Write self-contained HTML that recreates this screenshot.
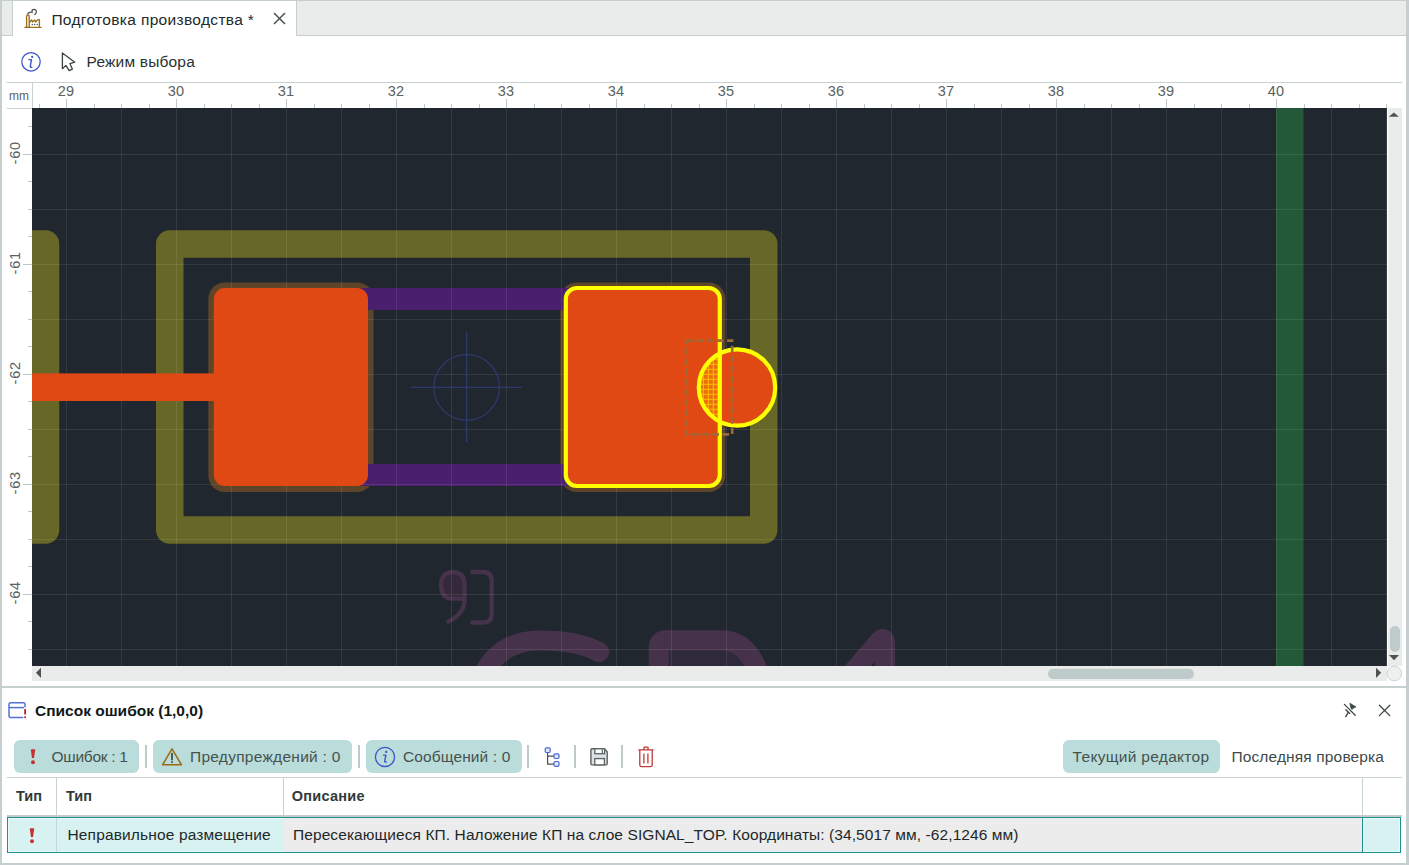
<!DOCTYPE html><html><head><meta charset="utf-8"><style>
*{margin:0;padding:0;box-sizing:border-box}
html,body{width:1409px;height:865px;overflow:hidden;background:#fff;font-family:"Liberation Sans",sans-serif;position:relative}
.a{position:absolute}
.t{position:absolute;white-space:pre;line-height:1}
</style></head><body><div class="a" style="left:0px;top:0px;width:1409px;height:1px;background:#c5cfcf"></div>
<div class="a" style="left:0px;top:0px;width:2px;height:865px;background:#c5cfcf"></div>
<div class="a" style="left:1406px;top:0px;width:3px;height:865px;background:#c5cfcf"></div>
<div class="a" style="left:2px;top:1px;width:1404px;height:34px;background:#eaeceb"></div>
<div class="a" style="left:2px;top:35px;width:1404px;height:1px;background:#c5cfcf"></div>
<div class="a" style="left:12px;top:1px;width:285px;height:35px;background:#fff;border-left:1px solid #c5cfcf;border-right:1px solid #c5cfcf"></div>
<svg class="a" style="left:22px;top:7px" width="22" height="22" viewBox="0 0 22 22">
<path d="M5.6 6.8 Q7.2 4.6 10 5.1 M10.3 5.3 Q9.2 2.5 12 2.4 Q14.6 2.4 14.3 5.1 Q14 6.8 12.8 7.4" fill="none" stroke="#4d5555" stroke-width="1.25" stroke-linecap="round"/>
<path d="M4.6 19.8 L4.6 9.3 Q4.6 8 5.9 8 Q7.2 8 7.2 9.3 L7.2 19.8 M7.6 15.2 L9.6 12.9 L10.6 15 L12.6 12.9 L13.6 15 L15.6 12.9 L17.4 12.7 L17.4 20.2 M2.4 20.4 L19.5 20.4" fill="none" stroke="#9b6e1e" stroke-width="1.35" stroke-linejoin="round"/>
<circle cx="10.3" cy="17.5" r="0.75" fill="#4d5555"/><circle cx="12.6" cy="17.5" r="0.75" fill="#4d5555"/><circle cx="15.2" cy="17.5" r="0.75" fill="#4d5555"/>
</svg>
<div class="t" style="left:51.4px;top:11.68px;font-size:15.5px;color:#222a2a;font-weight:400;letter-spacing:0.33px;">Подготовка производства *</div>
<svg class="a" style="left:272px;top:11px" width="15" height="15" viewBox="0 0 15 15"><path d="M2 2 L13 13 M13 2 L2 13" stroke="#4a5252" stroke-width="1.5"/></svg>
<svg class="a" style="left:19px;top:50px" width="24" height="24" viewBox="0 0 24 24"><circle cx="12" cy="11.8" r="9.2" fill="none" stroke="#3c56cc" stroke-width="1.25"/><circle cx="13.2" cy="6.9" r="1.1" fill="#3c56cc"/><path d="M9.9 9.6 L12.5 9.6 L11.3 16.2 Q11 17.7 12.9 17.1" fill="none" stroke="#3c56cc" stroke-width="1.35" stroke-linecap="round" stroke-linejoin="round"/></svg>
<svg class="a" style="left:60px;top:51px" width="18" height="22" viewBox="0 0 18 22"><path d="M2.4 2 L2.4 17.7 L5.9 14.4 L9.2 19.6 L12.4 18.2 L9.9 12.6 L14.8 11.2 Z" fill="#fff" stroke="#3a4444" stroke-width="1.3" stroke-linejoin="round"/></svg>
<div class="t" style="left:86.6px;top:53.68px;font-size:15.5px;color:#2a3232;font-weight:400;letter-spacing:0.18px;">Режим выбора</div>
<div class="a" style="left:7px;top:82px;width:1395px;height:1px;background:#c8d2d1"></div>
<div class="a" style="left:7px;top:108px;width:25px;height:1px;background:#c8d2d1"></div>
<div class="a" style="left:32px;top:83px;width:1px;height:25px;background:#c8d2d1"></div>
<div class="t" style="left:9px;top:89.74px;font-size:12px;color:#5a6262;font-weight:400;letter-spacing:0px;">mm</div>
<svg class="a" style="left:0;top:0" width="1409" height="865" viewBox="0 0 1409 865"><rect x="39" y="104" width="1" height="4" fill="#bcc8c7"/><rect x="66" y="99" width="1" height="9" fill="#bcc8c7"/><rect x="94" y="104" width="1" height="4" fill="#bcc8c7"/><rect x="121" y="104" width="1" height="4" fill="#bcc8c7"/><rect x="149" y="104" width="1" height="4" fill="#bcc8c7"/><rect x="176" y="99" width="1" height="9" fill="#bcc8c7"/><rect x="204" y="104" width="1" height="4" fill="#bcc8c7"/><rect x="231" y="104" width="1" height="4" fill="#bcc8c7"/><rect x="259" y="104" width="1" height="4" fill="#bcc8c7"/><rect x="286" y="99" width="1" height="9" fill="#bcc8c7"/><rect x="314" y="104" width="1" height="4" fill="#bcc8c7"/><rect x="341" y="104" width="1" height="4" fill="#bcc8c7"/><rect x="369" y="104" width="1" height="4" fill="#bcc8c7"/><rect x="396" y="99" width="1" height="9" fill="#bcc8c7"/><rect x="424" y="104" width="1" height="4" fill="#bcc8c7"/><rect x="451" y="104" width="1" height="4" fill="#bcc8c7"/><rect x="479" y="104" width="1" height="4" fill="#bcc8c7"/><rect x="506" y="99" width="1" height="9" fill="#bcc8c7"/><rect x="534" y="104" width="1" height="4" fill="#bcc8c7"/><rect x="561" y="104" width="1" height="4" fill="#bcc8c7"/><rect x="589" y="104" width="1" height="4" fill="#bcc8c7"/><rect x="616" y="99" width="1" height="9" fill="#bcc8c7"/><rect x="644" y="104" width="1" height="4" fill="#bcc8c7"/><rect x="671" y="104" width="1" height="4" fill="#bcc8c7"/><rect x="699" y="104" width="1" height="4" fill="#bcc8c7"/><rect x="726" y="99" width="1" height="9" fill="#bcc8c7"/><rect x="754" y="104" width="1" height="4" fill="#bcc8c7"/><rect x="781" y="104" width="1" height="4" fill="#bcc8c7"/><rect x="809" y="104" width="1" height="4" fill="#bcc8c7"/><rect x="836" y="99" width="1" height="9" fill="#bcc8c7"/><rect x="864" y="104" width="1" height="4" fill="#bcc8c7"/><rect x="891" y="104" width="1" height="4" fill="#bcc8c7"/><rect x="919" y="104" width="1" height="4" fill="#bcc8c7"/><rect x="946" y="99" width="1" height="9" fill="#bcc8c7"/><rect x="974" y="104" width="1" height="4" fill="#bcc8c7"/><rect x="1001" y="104" width="1" height="4" fill="#bcc8c7"/><rect x="1029" y="104" width="1" height="4" fill="#bcc8c7"/><rect x="1056" y="99" width="1" height="9" fill="#bcc8c7"/><rect x="1084" y="104" width="1" height="4" fill="#bcc8c7"/><rect x="1111" y="104" width="1" height="4" fill="#bcc8c7"/><rect x="1139" y="104" width="1" height="4" fill="#bcc8c7"/><rect x="1166" y="99" width="1" height="9" fill="#bcc8c7"/><rect x="1194" y="104" width="1" height="4" fill="#bcc8c7"/><rect x="1221" y="104" width="1" height="4" fill="#bcc8c7"/><rect x="1249" y="104" width="1" height="4" fill="#bcc8c7"/><rect x="1276" y="99" width="1" height="9" fill="#bcc8c7"/><rect x="1304" y="104" width="1" height="4" fill="#bcc8c7"/><rect x="1331" y="104" width="1" height="4" fill="#bcc8c7"/><rect x="1359" y="104" width="1" height="4" fill="#bcc8c7"/><rect x="1386" y="104" width="1" height="4" fill="#bcc8c7"/><rect x="28" y="126" width="4" height="1" fill="#bcc8c7"/><rect x="23" y="154" width="9" height="1" fill="#bcc8c7"/><rect x="28" y="181" width="4" height="1" fill="#bcc8c7"/><rect x="28" y="209" width="4" height="1" fill="#bcc8c7"/><rect x="28" y="236" width="4" height="1" fill="#bcc8c7"/><rect x="23" y="264" width="9" height="1" fill="#bcc8c7"/><rect x="28" y="291" width="4" height="1" fill="#bcc8c7"/><rect x="28" y="319" width="4" height="1" fill="#bcc8c7"/><rect x="28" y="346" width="4" height="1" fill="#bcc8c7"/><rect x="23" y="374" width="9" height="1" fill="#bcc8c7"/><rect x="28" y="401" width="4" height="1" fill="#bcc8c7"/><rect x="28" y="429" width="4" height="1" fill="#bcc8c7"/><rect x="28" y="456" width="4" height="1" fill="#bcc8c7"/><rect x="23" y="484" width="9" height="1" fill="#bcc8c7"/><rect x="28" y="511" width="4" height="1" fill="#bcc8c7"/><rect x="28" y="539" width="4" height="1" fill="#bcc8c7"/><rect x="28" y="566" width="4" height="1" fill="#bcc8c7"/><rect x="23" y="594" width="9" height="1" fill="#bcc8c7"/><rect x="28" y="621" width="4" height="1" fill="#bcc8c7"/><rect x="28" y="649" width="4" height="1" fill="#bcc8c7"/></svg>
<div class="t" style="left:25.900000000000006px;width:80px;text-align:center;top:83.58px;font-size:14.5px;color:#5a6262">29</div>
<div class="t" style="left:135.9px;width:80px;text-align:center;top:83.58px;font-size:14.5px;color:#5a6262">30</div>
<div class="t" style="left:245.89999999999998px;width:80px;text-align:center;top:83.58px;font-size:14.5px;color:#5a6262">31</div>
<div class="t" style="left:355.9px;width:80px;text-align:center;top:83.58px;font-size:14.5px;color:#5a6262">32</div>
<div class="t" style="left:465.9px;width:80px;text-align:center;top:83.58px;font-size:14.5px;color:#5a6262">33</div>
<div class="t" style="left:575.9px;width:80px;text-align:center;top:83.58px;font-size:14.5px;color:#5a6262">34</div>
<div class="t" style="left:685.9px;width:80px;text-align:center;top:83.58px;font-size:14.5px;color:#5a6262">35</div>
<div class="t" style="left:795.9px;width:80px;text-align:center;top:83.58px;font-size:14.5px;color:#5a6262">36</div>
<div class="t" style="left:905.9px;width:80px;text-align:center;top:83.58px;font-size:14.5px;color:#5a6262">37</div>
<div class="t" style="left:1015.9000000000001px;width:80px;text-align:center;top:83.58px;font-size:14.5px;color:#5a6262">38</div>
<div class="t" style="left:1125.9px;width:80px;text-align:center;top:83.58px;font-size:14.5px;color:#5a6262">39</div>
<div class="t" style="left:1235.9px;width:80px;text-align:center;top:83.58px;font-size:14.5px;color:#5a6262">40</div>
<div class="t" style="left:-18.8px;top:140.18px;width:80px;text-align:center;font-size:14.5px;letter-spacing:0.8px;text-indent:0.8px;color:#5a6262;transform-origin:40px 13.12px;transform:rotate(-90deg)">-60</div>
<div class="t" style="left:-18.8px;top:250.18px;width:80px;text-align:center;font-size:14.5px;letter-spacing:0.8px;text-indent:0.8px;color:#5a6262;transform-origin:40px 13.12px;transform:rotate(-90deg)">-61</div>
<div class="t" style="left:-18.8px;top:360.18px;width:80px;text-align:center;font-size:14.5px;letter-spacing:0.8px;text-indent:0.8px;color:#5a6262;transform-origin:40px 13.12px;transform:rotate(-90deg)">-62</div>
<div class="t" style="left:-18.8px;top:470.18px;width:80px;text-align:center;font-size:14.5px;letter-spacing:0.8px;text-indent:0.8px;color:#5a6262;transform-origin:40px 13.12px;transform:rotate(-90deg)">-63</div>
<div class="t" style="left:-18.8px;top:580.18px;width:80px;text-align:center;font-size:14.5px;letter-spacing:0.8px;text-indent:0.8px;color:#5a6262;transform-origin:40px 13.12px;transform:rotate(-90deg)">-64</div>
<svg class="a" style="left:32px;top:108px" width="1355" height="558" viewBox="32 108 1355 558"><rect x="32" y="108" width="1355" height="558" fill="#21272f"/><rect x="169.75" y="243.9" width="594" height="286.2" fill="none" stroke="#676828" stroke-width="27.5" stroke-linejoin="round"/><path d="M20 230.2 L45.5 230.2 A13.75 13.75 0 0 1 59.25 243.95 L59.25 530.05 A13.75 13.75 0 0 1 45.5 543.8 L20 543.8 Z" fill="#676828"/><rect x="1276" y="108" width="27.5" height="558" fill="#235838"/><path d="M464.5 598.7 L453 598.7 Q441.2 598.7 441.2 585.5 Q441.2 572.2 453 572.2 Q464.5 572.2 464.5 585.5 Z" fill="#34293b"/><path d="M464.5 598.7 L453 598.7 Q441.2 598.7 441.2 585.5 Q441.2 572.2 453 572.2 Q464.5 572.2 464.5 585.5 L464.5 600 Q464 614 448.5 621.5" fill="none" stroke="#46334b" stroke-width="4.3" stroke-linecap="round" stroke-linejoin="round"/><path d="M472.2 572 L483 572 Q491.7 572 491.7 580.7 L491.7 613.8 Q491.7 622.5 483 622.5 L472.2 622.5" fill="none" stroke="#46334b" stroke-width="4.3" stroke-linecap="round"/><path d="M599 652 C585 644, 565 640.4, 540 640.4 C510 640.4, 490 655, 478 685" fill="none" stroke="#46334b" stroke-width="20" stroke-linecap="round"/><path d="M669 650 L724 650 Q746 650 756 690 L669 690 Z" fill="#2f2a3b"/><path d="M658.7 690 L658.7 648 Q658.7 640.2 666 640.2 L722 640.2 Q752 640.2 764 690" fill="none" stroke="#46334b" stroke-width="20" stroke-linejoin="round"/><path d="M846 680 L879.5 641 Q884.5 636.5 885 643 L885 690" fill="none" stroke="#46334b" stroke-width="20" stroke-linecap="round" stroke-linejoin="round"/><rect x="208.3" y="282.5" width="165.2" height="209.5" rx="16.5" fill="#5e4428"/><rect x="560.3" y="282.5" width="165" height="209.5" rx="16.5" fill="#5e4428"/><rect x="360" y="288" width="210" height="22" fill="#4a1f6e"/><rect x="360" y="464" width="210" height="22" fill="#4a1f6e"/><rect x="66" y="108" width="1" height="558" fill="#ffffff" fill-opacity="0.09"/><rect x="121" y="108" width="1" height="558" fill="#ffffff" fill-opacity="0.09"/><rect x="176" y="108" width="1" height="558" fill="#ffffff" fill-opacity="0.09"/><rect x="231" y="108" width="1" height="558" fill="#ffffff" fill-opacity="0.09"/><rect x="286" y="108" width="1" height="558" fill="#ffffff" fill-opacity="0.09"/><rect x="341" y="108" width="1" height="558" fill="#ffffff" fill-opacity="0.09"/><rect x="396" y="108" width="1" height="558" fill="#ffffff" fill-opacity="0.09"/><rect x="451" y="108" width="1" height="558" fill="#ffffff" fill-opacity="0.09"/><rect x="506" y="108" width="1" height="558" fill="#ffffff" fill-opacity="0.09"/><rect x="561" y="108" width="1" height="558" fill="#ffffff" fill-opacity="0.09"/><rect x="616" y="108" width="1" height="558" fill="#ffffff" fill-opacity="0.09"/><rect x="671" y="108" width="1" height="558" fill="#ffffff" fill-opacity="0.09"/><rect x="726" y="108" width="1" height="558" fill="#ffffff" fill-opacity="0.09"/><rect x="781" y="108" width="1" height="558" fill="#ffffff" fill-opacity="0.09"/><rect x="836" y="108" width="1" height="558" fill="#ffffff" fill-opacity="0.09"/><rect x="891" y="108" width="1" height="558" fill="#ffffff" fill-opacity="0.09"/><rect x="946" y="108" width="1" height="558" fill="#ffffff" fill-opacity="0.09"/><rect x="1001" y="108" width="1" height="558" fill="#ffffff" fill-opacity="0.09"/><rect x="1056" y="108" width="1" height="558" fill="#ffffff" fill-opacity="0.09"/><rect x="1111" y="108" width="1" height="558" fill="#ffffff" fill-opacity="0.09"/><rect x="1166" y="108" width="1" height="558" fill="#ffffff" fill-opacity="0.09"/><rect x="1221" y="108" width="1" height="558" fill="#ffffff" fill-opacity="0.09"/><rect x="1276" y="108" width="1" height="558" fill="#ffffff" fill-opacity="0.09"/><rect x="1331" y="108" width="1" height="558" fill="#ffffff" fill-opacity="0.09"/><rect x="1386" y="108" width="1" height="558" fill="#ffffff" fill-opacity="0.09"/><rect x="32" y="154" width="1355" height="1" fill="#ffffff" fill-opacity="0.09"/><rect x="32" y="209" width="1355" height="1" fill="#ffffff" fill-opacity="0.09"/><rect x="32" y="264" width="1355" height="1" fill="#ffffff" fill-opacity="0.09"/><rect x="32" y="319" width="1355" height="1" fill="#ffffff" fill-opacity="0.09"/><rect x="32" y="374" width="1355" height="1" fill="#ffffff" fill-opacity="0.09"/><rect x="32" y="429" width="1355" height="1" fill="#ffffff" fill-opacity="0.09"/><rect x="32" y="484" width="1355" height="1" fill="#ffffff" fill-opacity="0.09"/><rect x="32" y="539" width="1355" height="1" fill="#ffffff" fill-opacity="0.09"/><rect x="32" y="594" width="1355" height="1" fill="#ffffff" fill-opacity="0.09"/><rect x="32" y="649" width="1355" height="1" fill="#ffffff" fill-opacity="0.09"/><circle cx="466.6" cy="387.4" r="32.8" fill="none" stroke="#2e3a6c" stroke-width="1.3"/><path d="M411 387.4 L522 387.4 M466.6 332 L466.6 442" stroke="#2e3a6c" stroke-width="1.3"/><rect x="32" y="373.4" width="190" height="27.6" fill="#e04814"/><rect x="213.8" y="288" width="154.2" height="198" rx="11" fill="#e04814"/><rect x="565.8" y="288" width="154" height="198" rx="11" fill="#e04814"/><circle cx="737" cy="387.5" r="38.2" fill="#e04814"/><defs><clipPath id="hc"><path d="M719.8 353.39 A38.2 38.2 0 0 0 719.8 421.61 Z"/></clipPath><pattern id="hp" x="702.8" y="373.8" width="5" height="5" patternUnits="userSpaceOnUse"><rect width="5" height="5" fill="#ea6e0c"/><rect x="0" y="0" width="1.05" height="5" fill="#ffbc00"/><rect x="0" y="0" width="5" height="1.05" fill="#ffbc00"/></pattern></defs><rect x="690" y="340" width="40" height="95" fill="url(#hp)" clip-path="url(#hc)"/><rect x="565.8" y="288" width="154" height="198" rx="11" fill="none" stroke="#ffff00" stroke-width="4.2"/><circle cx="737" cy="387.5" r="38.2" fill="none" stroke="#ffff00" stroke-width="4.2"/><rect x="686.3" y="340.6" width="45.9" height="93.8" fill="none" stroke="#9b6a35" stroke-width="2.6" stroke-dasharray="6.6 3.6"/></svg>
<div class="a" style="left:1388px;top:108px;width:14px;height:558px;background:#eaeceb"></div>
<svg class="a" style="left:1388px;top:108px" width="14" height="558" viewBox="0 0 14 558"><path d="M0.8 8.7 L10.9 8.7 L5.85 4.5 Z" fill="#4a5454"/><rect x="2" y="518" width="10" height="26" rx="5" fill="#bfcbca"/><path d="M1 547 L11 547 L6 552.2 Z" fill="#4a5454"/></svg>
<div class="a" style="left:32px;top:666px;width:1355px;height:15px;background:#eaeceb"></div>
<svg class="a" style="left:32px;top:666px" width="1355" height="15" viewBox="0 0 1355 15"><path d="M9 1.7 L9 12 L4 6.85 Z" fill="#4a5454"/><rect x="1016" y="2.8" width="146" height="10.2" rx="5.1" fill="#bfcbca"/><path d="M1344 1.7 L1344 12 L1349.2 6.85 Z" fill="#4a5454"/></svg>
<svg class="a" style="left:1386px;top:665px" width="17" height="17" viewBox="0 0 17 17"><circle cx="8.3" cy="8.5" r="7.3" fill="#eef0ef" stroke="#c8d4d3" stroke-width="1"/></svg>
<div class="a" style="left:2px;top:686px;width:1404px;height:2px;background:#c5cfcf"></div>
<svg class="a" style="left:6px;top:700px" width="22" height="22" viewBox="0 0 22 22"><path d="M19 6.7 L19 4.3 Q19 2.8 17.5 2.8 L4.5 2.8 Q3 2.8 3 4.3 L3 16 Q3 17.5 4.5 17.5 L16.6 17.5" fill="none" stroke="#5470d8" stroke-width="1.5" stroke-linecap="round"/><path d="M3 7.6 L18 7.6" stroke="#5470d8" stroke-width="1.5"/><path d="M19.1 9.6 L19.1 13.8" stroke="#b82525" stroke-width="1.8" stroke-linecap="round"/><circle cx="19.1" cy="17.2" r="1.05" fill="#b82525"/></svg>
<div class="t" style="left:35px;top:702.78px;font-size:15.5px;color:#111818;font-weight:700;letter-spacing:0px;">Список ошибок (1,0,0)</div>
<svg class="a" style="left:1340px;top:700px" width="20" height="20" viewBox="0 0 20 20"><path d="M9.9 3.3 L15.9 6.9 L12.9 8.3 L11.4 10.6 Z" fill="#3e4848" stroke="#3e4848" stroke-width="0.8" stroke-linejoin="round"/><path d="M5.8 9.8 L9.6 13.3 M8.2 12.4 L5.8 16.6" stroke="#3e4848" stroke-width="1.4" stroke-linecap="round"/><path d="M4.2 4.3 L15.4 15.4" stroke="#fff" stroke-width="3.2"/><path d="M4.4 4.4 L15.2 15.2" stroke="#3e4848" stroke-width="1.3" stroke-linecap="round"/></svg>
<svg class="a" style="left:1377px;top:703px" width="16" height="16" viewBox="0 0 16 16"><path d="M2.4 2.2 L12.8 12.6 M12.8 2.2 L2.4 12.6" stroke="#3e4848" stroke-width="1.3" stroke-linecap="round"/></svg>
<div class="a" style="left:14px;top:740px;width:125px;height:33px;background:#badcda;border-radius:6px"></div>
<div class="a" style="left:152.5px;top:740px;width:199.5px;height:33px;background:#badcda;border-radius:6px"></div>
<div class="a" style="left:365.5px;top:740px;width:156.0px;height:33px;background:#badcda;border-radius:6px"></div>
<div class="a" style="left:1062.5px;top:740px;width:157.5px;height:33px;background:#badcda;border-radius:6px"></div>
<div class="a" style="left:144.6px;top:745.3px;width:2px;height:22.4px;background:#bfcbca"></div>
<div class="a" style="left:358px;top:745.3px;width:2px;height:22.4px;background:#bfcbca"></div>
<div class="a" style="left:527px;top:745.3px;width:2px;height:22.4px;background:#bfcbca"></div>
<div class="a" style="left:574px;top:745.3px;width:2px;height:22.4px;background:#bfcbca"></div>
<div class="a" style="left:621px;top:745.3px;width:2px;height:22.4px;background:#bfcbca"></div>
<svg class="a" style="left:29px;top:747.6px" width="8" height="18" viewBox="0 0 8 18"><path d="M1.9 2.2 Q1.8 1.3 2.8 1.3 L5.2 1.3 Q6.2 1.3 6.1 2.2 L5.1 9.6 Q5 10.3 4 10.3 Q3 10.3 2.9 9.6 Z" fill="#c42f2f"/><circle cx="4" cy="14.2" r="1.95" fill="#c42f2f"/></svg>
<div class="t" style="left:51.5px;top:748.68px;font-size:15.5px;color:#46524f;font-weight:400;letter-spacing:-0.28px;">Ошибок : 1</div>
<svg class="a" style="left:160px;top:746px" width="24" height="21" viewBox="0 0 24 21"><path d="M12 2.9 L21.4 18.7 L2.6 18.7 Z" fill="none" stroke="#9b6a12" stroke-width="1.5" stroke-linejoin="round"/><path d="M12 7.6 L12 13.6" stroke="#3a4444" stroke-width="1.7" stroke-linecap="round"/><circle cx="12" cy="16" r="0.95" fill="#3a4444"/></svg>
<div class="t" style="left:190px;top:748.68px;font-size:15.5px;color:#46524f;font-weight:400;letter-spacing:0.27px;">Предупреждений : 0</div>
<svg class="a" style="left:373px;top:746px" width="24" height="22" viewBox="0 0 24 22"><circle cx="12" cy="10.9" r="9.6" fill="none" stroke="#3c56cc" stroke-width="1.3"/><circle cx="13.2" cy="5.9" r="1.15" fill="#3c56cc"/><path d="M10.6 9.1 L12.9 9.1 L11.7 15 Q11.4 16.5 13.3 15.9" fill="none" stroke="#3c56cc" stroke-width="1.4" stroke-linecap="round" stroke-linejoin="round"/></svg>
<div class="t" style="left:403px;top:748.68px;font-size:15.5px;color:#46524f;font-weight:400;letter-spacing:0.11px;">Сообщений : 0</div>
<svg class="a" style="left:535px;top:740px" width="130" height="35" viewBox="0 0 130 35"><path d="M12.6 12.5 L12.6 24 L19 24 M12.6 16.2 L19 16.2" fill="none" stroke="#4a5252" stroke-width="1.25"/><rect x="10.2" y="7.9" width="5" height="4.6" rx="1.2" fill="#dfe7f7" stroke="#4a68d8" stroke-width="1.2"/><rect x="19" y="13.9" width="5" height="4.6" rx="1.2" fill="#dfe7f7" stroke="#4a68d8" stroke-width="1.2"/><rect x="19" y="21.5" width="5" height="4.8" rx="1.2" fill="#dfe7f7" stroke="#4a68d8" stroke-width="1.2"/><path d="M55.9 9.9 Q55.9 8.8 57 8.8 L69.3 8.8 L72.2 11.7 L72.2 23.8 Q72.2 24.9 71.1 24.9 L57 24.9 Q55.9 24.9 55.9 23.8 Z" fill="#dde2e2" stroke="#5a6262" stroke-width="1.4" stroke-linejoin="round"/><rect x="59.8" y="8.8" width="9.8" height="4.9" fill="#fff" stroke="#5a6262" stroke-width="1.3"/><path d="M67.3 9.4 L67.3 12.9" stroke="#5a6262" stroke-width="1.2"/><rect x="59.8" y="18.6" width="9.6" height="6.3" fill="#fff" stroke="#5a6262" stroke-width="1.3"/><path d="M103.3 9.8 L118.6 9.8 M108.9 9.6 L108.9 8 Q108.9 7.2 109.7 7.2 L112.3 7.2 Q113.1 7.2 113.1 8 L113.1 9.6 M104.8 9.8 L104.8 24.9 Q104.8 26.6 106.5 26.6 L115.5 26.6 Q117.2 26.6 117.2 24.9 L117.2 9.8 M108.9 13.4 L108.9 23.4 M112.9 13.4 L112.9 23.4" fill="none" stroke="#c03838" stroke-width="1.3"/></svg>
<div class="t" style="left:1072.6px;top:748.68px;font-size:15.5px;color:#46524f;font-weight:400;letter-spacing:0.3px;">Текущий редактор</div>
<div class="t" style="left:1231.4px;top:748.68px;font-size:15.5px;color:#3f4a4a;font-weight:400;letter-spacing:0.14px;">Последняя проверка</div>
<div class="a" style="left:7px;top:777px;width:1395px;height:1px;background:#c8d2d1"></div>
<div class="a" style="left:56px;top:778px;width:1px;height:38px;background:#c8d2d1"></div>
<div class="a" style="left:283px;top:778px;width:1px;height:38px;background:#c8d2d1"></div>
<div class="a" style="left:1362px;top:778px;width:1px;height:38px;background:#c8d2d1"></div>
<div class="a" style="left:7px;top:815px;width:1395px;height:2px;background:#c5cccc"></div>
<div class="t" style="left:16px;top:788.63px;font-size:14.5px;color:#2f3a3a;font-weight:700;letter-spacing:0px;">Тип</div>
<div class="t" style="left:66px;top:788.63px;font-size:14.5px;color:#2f3a3a;font-weight:700;letter-spacing:0px;">Тип</div>
<div class="t" style="left:291.8px;top:788.63px;font-size:14.5px;color:#2f3a3a;font-weight:700;letter-spacing:0.25px;">Описание</div>
<div class="a" style="left:7px;top:817px;width:1394px;height:36px;background:#d8f1f1;border:1px solid #1f8e8e;box-shadow:inset 0 0 0 1px #eaf9f9"></div>
<div class="a" style="left:284px;top:818px;width:1078px;height:34px;background:#ebeceb"></div>
<div class="a" style="left:56px;top:818px;width:1px;height:34px;background:#c5d8d8"></div>
<div class="a" style="left:1362px;top:818px;width:1px;height:34px;background:#1f8e8e"></div>
<div class="a" style="left:1363px;top:818px;width:1px;height:34px;background:#eaf9f9"></div>
<svg class="a" style="left:28px;top:826.5px" width="8" height="18" viewBox="0 0 8 18"><path d="M1.9 2.2 Q1.8 1.3 2.8 1.3 L5.2 1.3 Q6.2 1.3 6.1 2.2 L5.1 9.6 Q5 10.3 4 10.3 Q3 10.3 2.9 9.6 Z" fill="#c42f2f"/><circle cx="4" cy="14.2" r="1.95" fill="#c42f2f"/></svg>
<div class="t" style="left:67.5px;top:826.78px;font-size:15.5px;color:#1f2828;font-weight:400;letter-spacing:0.14px;">Неправильное размещение</div>
<div class="t" style="left:293px;top:826.78px;font-size:15.5px;color:#1f2828;font-weight:400;letter-spacing:0.084px;">Пересекающиеся КП. Наложение КП на слое SIGNAL_TOP. Координаты: (34,5017 мм, -62,1246 мм)</div>
<div class="a" style="left:2px;top:863px;width:1404px;height:2px;background:#c5cfcf"></div></body></html>
